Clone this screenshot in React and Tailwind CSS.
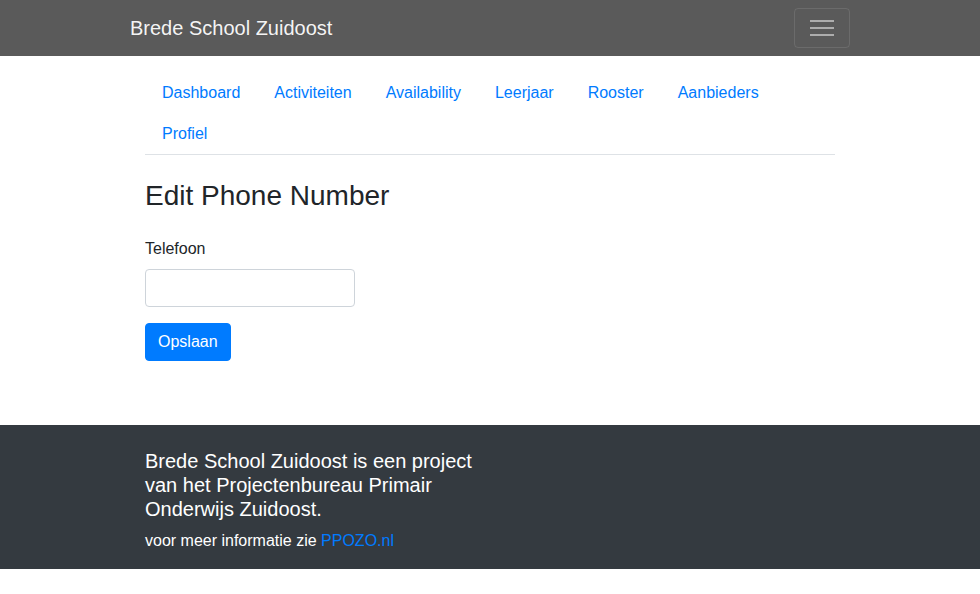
import React, { useState } from 'react';

const links = ['Dashboard', 'Activiteiten', 'Availability', 'Leerjaar', 'Rooster', 'Aanbieders', 'Profiel'];

export default function App() {
  const [phone, setPhone] = useState('');

  return (
    <div className="min-h-screen bg-white text-[#212529] font-['Liberation_Sans',Arial,sans-serif] text-base leading-6">
      <nav className="bg-[#5a5a5a] py-2 h-14">
        <div className="w-[720px] mx-auto flex items-center justify-between">
          <a href="#" className="text-xl leading-[30px] py-[5px] text-white/95">
            Brede School Zuidoost
          </a>
          <button className="w-14 h-10 border border-white/10 rounded flex flex-col items-center justify-center gap-[5px]">
            <span className="block w-6 h-[2px] bg-white/50" />
            <span className="block w-6 h-[2px] bg-white/50" />
            <span className="block w-6 h-[2px] bg-white/50" />
          </button>
        </div>
      </nav>

      <div className="w-[720px] mx-auto px-[15px]">
        <ul className="flex flex-wrap border-b border-[#dee2e6] pt-4">
          {links.map((l) => (
            <li key={l}>
              <a href="#" className="block px-[17px] pt-[9px] h-[41px] text-[#007bff] leading-6">
                {l}
              </a>
            </li>
          ))}
        </ul>

        <h3 className="text-[28px] leading-[1.2] mt-6 mb-6 font-normal">Edit Phone Number</h3>

        <form onSubmit={(e) => e.preventDefault()}>
          <div className="mb-4">
            <label className="block mb-2" htmlFor="tel">Telefoon</label>
            <input
              id="tel"
              value={phone}
              onChange={(e) => setPhone(e.target.value)}
              className="block w-[210px] h-[38px] border border-[#ced4da] rounded px-3 outline-none"
            />
          </div>
          <button type="submit" className="bg-[#007bff] border border-[#007bff] text-white rounded px-3 h-[38px] leading-6">
            Opslaan
          </button>
        </form>
      </div>

      <footer className="bg-[#343a40] text-white mt-16 pt-6 pb-4">
        <div className="w-[720px] mx-auto px-[15px]">
          <div className="w-[330px]">
            <h5 className="text-xl leading-6 mb-2 font-normal">
              Brede School Zuidoost is een project van het Projectenbureau Primair Onderwijs Zuidoost.
            </h5>
            <p>
              voor meer informatie zie <a href="#" className="text-[#007bff]">PPOZO.nl</a>
            </p>
          </div>
        </div>
      </footer>
    </div>
  );
}
